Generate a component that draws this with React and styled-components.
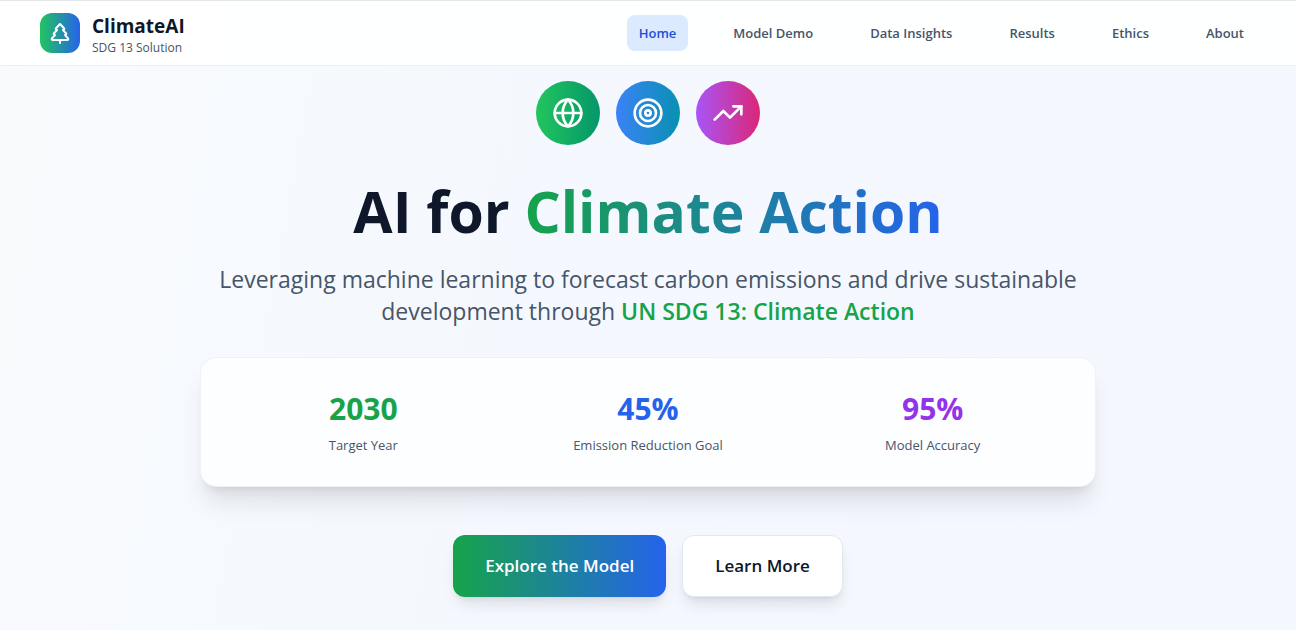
import React from "react";
import styled, { createGlobalStyle } from "styled-components";
import { Globe, Target, TreePine, TrendingUp } from "lucide-react";

const GlobalStyle = createGlobalStyle`
  *, *::before, *::after { box-sizing: border-box; }
  body {
    margin: 0;
    font-family: "Segoe UI", "Open Sans", "Noto Sans", sans-serif;
    color: #0f172a;
  }
  h1, p, dl, dt, dd, ul { margin: 0; padding: 0; }
  a { color: inherit; text-decoration: none; }
`;

const Page = styled.div`
  min-height: 100vh;
  background: linear-gradient(100deg, #f9fafc, #f5f9fe 30%, #f4f8fe 70%, #f5f7ff);
`;

const Header = styled.header`
  background: rgba(255, 255, 255, 0.9);
  border-top: 1px solid #e5e7eb;
  border-bottom: 1px solid #eceff4;
`;

const HeaderInner = styled.div`
  display: flex;
  align-items: center;
  justify-content: space-between;
  max-width: 1280px;
  height: 64px;
  margin: 0 auto;
  padding: 0 32px;
`;

const Brand = styled.a`
  display: flex;
  align-items: center;
  gap: 12px;
`;

const BrandMark = styled.span`
  display: grid;
  place-items: center;
  width: 40px;
  height: 40px;
  border-radius: 12px;
  background: linear-gradient(to right, #22c55e, #2563eb);
  color: #fff;
`;

const BrandText = styled.span`
  display: flex;
  flex-direction: column;
  padding-top: 2px;
`;

const BrandName = styled.span`
  font-size: 19px;
  line-height: 28px;
  font-weight: 700;
`;

const BrandTag = styled.span`
  font-size: 12px;
  line-height: 16px;
  color: #475569;
`;

const NavList = styled.ul`
  display: flex;
  gap: 33px;
  list-style: none;
`;

const NavLink = styled.a`
  display: block;
  padding: 8px 12px;
  border-radius: 8px;
  font-size: 13px;
  line-height: 20px;
  font-weight: 600;
  color: ${(p) => (p.$active ? "#1d4ed8" : "#475569")};
  background: ${(p) => (p.$active ? "#dbeafe" : "transparent")};
`;

const Hero = styled.main`
  display: flex;
  flex-direction: column;
  align-items: center;
  max-width: 960px;
  margin: 0 auto;
  padding: 15px 32px 32px;
  text-align: center;
`;

const Badges = styled.div`
  display: flex;
  gap: 16px;
`;

const Badge = styled.span`
  display: grid;
  place-items: center;
  width: 64px;
  height: 64px;
  border-radius: 50%;
  background: linear-gradient(to right, ${(p) => p.$from}, ${(p) => p.$to});
  color: #fff;
`;

const Title = styled.h1`
  margin-top: 34px;
  font-size: 57px;
  line-height: 64px;
  font-weight: 700;
`;

const GradientText = styled.span`
  background: linear-gradient(to right, #16a34a, #2563eb);
  background-clip: text;
  -webkit-background-clip: text;
  color: transparent;
`;

const Lead = styled.p`
  max-width: 880px;
  margin-top: 20px;
  font-size: 23px;
  line-height: 32px;
  color: #475569;
`;

const Highlight = styled.strong`
  font-weight: 600;
  color: #16a34a;
`;

const StatsCard = styled.dl`
  display: grid;
  grid-template-columns: repeat(3, 1fr);
  gap: 24px;
  width: 100%;
  margin-top: 30px;
  padding: 33px 32px 31px;
  border: 1px solid #eef1f6;
  border-radius: 16px;
  background: #fdfeff;
  box-shadow: 0 20px 25px -5px rgba(0, 0, 0, 0.1), 0 8px 10px -6px rgba(0, 0, 0, 0.1);
`;

const Stat = styled.div`
  display: flex;
  flex-direction: column-reverse;
  gap: 8px;
`;

const StatLabel = styled.dt`
  font-size: 13px;
  line-height: 20px;
  color: #475569;
`;

const StatValue = styled.dd`
  font-size: 30px;
  line-height: 36px;
  font-weight: 700;
  color: ${(p) => p.$color};
`;

const Actions = styled.div`
  display: flex;
  gap: 16px;
  margin-top: 48px;
`;

const Button = styled.button`
  padding: 16px 32px;
  border: ${(p) => (p.$primary ? "none" : "1px solid #e2e8f0")};
  border-radius: 12px;
  background: ${(p) => (p.$primary ? "linear-gradient(to right, #16a34a, #2563eb)" : "#fff")};
  color: ${(p) => (p.$primary ? "#fff" : "#0f172a")};
  font-family: inherit;
  font-size: 17px;
  line-height: 28px;
  font-weight: 600;
  box-shadow: 0 10px 15px -3px rgba(0, 0, 0, 0.1), 0 4px 6px -4px rgba(0, 0, 0, 0.1);
  cursor: pointer;
`;

const links = ["Home", "Model Demo", "Data Insights", "Results", "Ethics", "About"];

const badges = [
  { Icon: Globe, from: "#22c55e", to: "#059669" },
  { Icon: Target, from: "#3b82f6", to: "#0891b2" },
  { Icon: TrendingUp, from: "#a855f7", to: "#db2777" },
];

const stats = [
  { value: "2030", label: "Target Year", color: "#16a34a" },
  { value: "45%", label: "Emission Reduction Goal", color: "#2563eb" },
  { value: "95%", label: "Model Accuracy", color: "#9333ea" },
];

export default function App() {
  return (
    <Page>
      <GlobalStyle />
      <Header>
        <HeaderInner>
          <Brand href="#home">
            <BrandMark>
              <TreePine size={24} aria-hidden="true" />
            </BrandMark>
            <BrandText>
              <BrandName>ClimateAI</BrandName>
              <BrandTag>SDG 13 Solution</BrandTag>
            </BrandText>
          </Brand>
          <nav>
            <NavList>
              {links.map((label, i) => (
                <li key={label}>
                  <NavLink href={`#${label.toLowerCase().replace(" ", "-")}`} $active={i === 0}>
                    {label}
                  </NavLink>
                </li>
              ))}
            </NavList>
          </nav>
        </HeaderInner>
      </Header>
      <Hero>
        <Badges>
          {badges.map(({ Icon, from, to }) => (
            <Badge key={from} $from={from} $to={to}>
              <Icon size={32} aria-hidden="true" />
            </Badge>
          ))}
        </Badges>
        <Title>
          AI for <GradientText>Climate Action</GradientText>
        </Title>
        <Lead>
          Leveraging machine learning to forecast carbon emissions and drive sustainable
          development through <Highlight>UN SDG 13: Climate Action</Highlight>
        </Lead>
        <StatsCard>
          {stats.map((s) => (
            <Stat key={s.label}>
              <StatLabel>{s.label}</StatLabel>
              <StatValue $color={s.color}>{s.value}</StatValue>
            </Stat>
          ))}
        </StatsCard>
        <Actions>
          <Button type="button" $primary>Explore the Model</Button>
          <Button type="button">Learn More</Button>
        </Actions>
      </Hero>
    </Page>
  );
}
